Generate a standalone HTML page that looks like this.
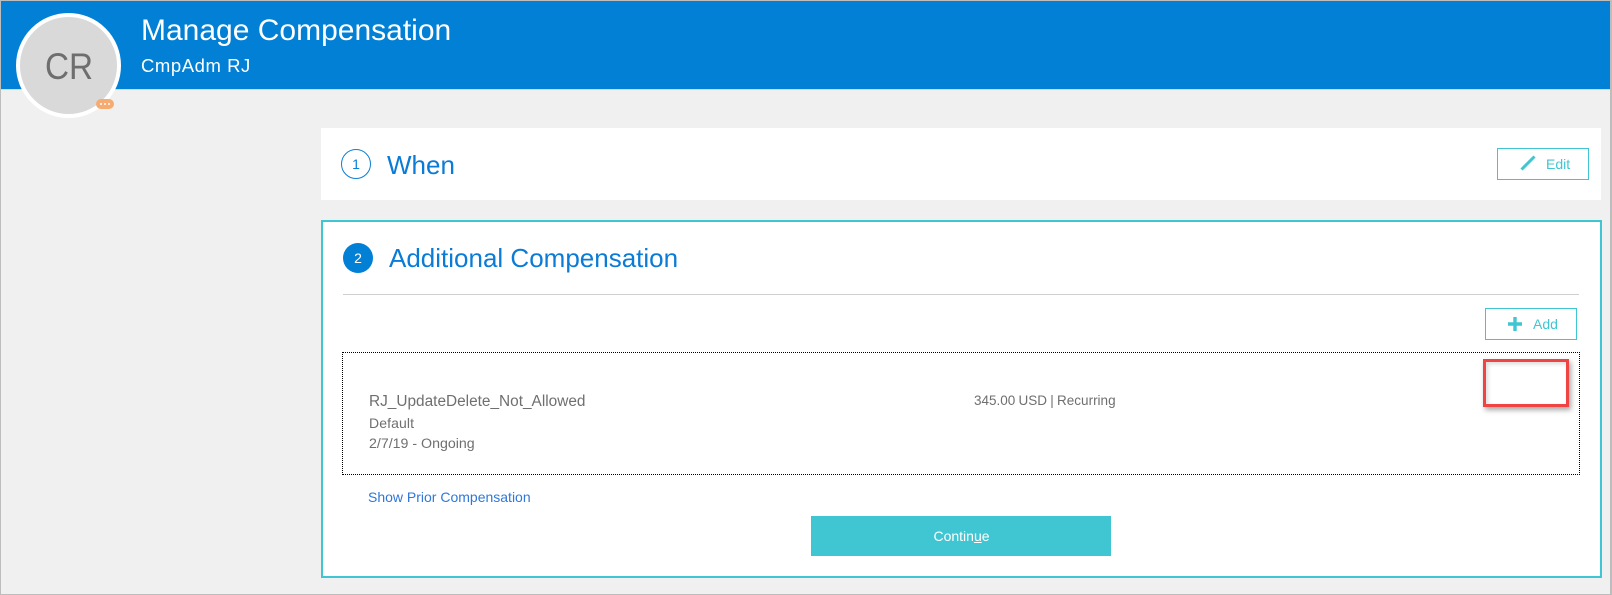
<!DOCTYPE html>
<html>
<head>
<meta charset="utf-8">
<style>
html,body{margin:0;padding:0;width:1612px;height:595px;overflow:hidden;background:#f0f0f0;}
body{position:relative;font-family:"Liberation Sans",Arial,sans-serif;}
.a{position:absolute;box-sizing:border-box;white-space:nowrap;}
.t{position:absolute;white-space:nowrap;line-height:1;}
</style>
</head>
<body>
<div class="a" style="left:0;top:0;width:1612px;height:595px;border:1px solid #bdbdbd;border-right-width:2px;"></div>
<div class="a" style="left:1px;top:1px;width:1609px;height:88px;background:#0180d6;"></div>
<div class="a" style="left:1px;top:89px;width:1609px;height:1px;background:#c4dcee;"></div>

<div class="a" style="left:16px;top:13px;width:105px;height:105px;border-radius:50%;background:#d9d9d9;border:4px solid #fff;"></div>
<div class="t" style="left:45px;top:48px;font-size:37px;transform:scaleX(.9);transform-origin:0 0;color:#6e6e6e;">CR</div>
<div class="a" style="left:96px;top:99px;width:18px;height:10px;border-radius:5px;background:#f6ab70;"></div>
<div class="a" style="left:100px;top:103px;width:2px;height:2px;border-radius:50%;background:#fff;"></div>
<div class="a" style="left:104px;top:103px;width:2px;height:2px;border-radius:50%;background:#fff;"></div>
<div class="a" style="left:108px;top:103px;width:2px;height:2px;border-radius:50%;background:#fff;"></div>

<div class="t" style="left:141px;top:16px;font-size:30px;color:#fff;">Manage Compensation</div>
<div class="t" style="left:141px;top:57px;font-size:18.5px;letter-spacing:.55px;color:#fff;">CmpAdm RJ</div>

<div class="a" style="left:321px;top:128px;width:1280px;height:72px;background:#fff;"></div>
<div class="a" style="left:341px;top:149px;width:30px;height:30px;border-radius:50%;border:1px solid #0a7fd5;"></div>
<div class="t" style="left:341px;top:157px;width:30px;text-align:center;font-size:14px;color:#0a7fd5;">1</div>
<div class="t" style="left:387px;top:152px;font-size:26px;color:#0a7bd6;">When</div>
<div class="a" style="left:1497px;top:148px;width:92px;height:32px;border:1px solid #40c6d2;"></div>
<svg class="a" style="left:1520px;top:155px;" width="16" height="16" viewBox="0 0 16 16"><path d="M1.5 14.5 L14.5 1.5" stroke="#40c6d2" stroke-width="3" fill="none"/></svg>
<div class="t" style="left:1546px;top:157px;font-size:14px;color:#40c6d2;">Edit</div>

<div class="a" style="left:321px;top:220px;width:1281px;height:358px;background:#fff;border:2px solid #40c6d2;"></div>
<div class="a" style="left:343px;top:243px;width:30px;height:30px;border-radius:50%;background:#0180d6;"></div>
<div class="t" style="left:343px;top:251px;width:30px;text-align:center;font-size:14px;color:#fff;">2</div>
<div class="t" style="left:389px;top:245px;font-size:26px;color:#0a7bd6;">Additional Compensation</div>
<div class="a" style="left:343px;top:294px;width:1236px;height:1px;background:#cfcfcf;"></div>

<div class="a" style="left:1485px;top:308px;width:92px;height:32px;border:1px solid #40c6d2;"></div>
<svg class="a" style="left:1508px;top:317px;" width="14" height="14" viewBox="0 0 14 14"><path d="M7 0V14M0 7H14" stroke="#40c6d2" stroke-width="3.4" fill="none"/></svg>
<div class="t" style="left:1533px;top:317px;font-size:14px;color:#40c6d2;">Add</div>

<div class="a" style="left:342px;top:352px;width:1238px;height:123px;border:1px dotted #000;"></div>
<div class="t" style="left:369px;top:394px;font-size:15.4px;color:#6f6f6f;">RJ_UpdateDelete_Not_Allowed</div>
<div class="t" style="left:369px;top:416px;font-size:14px;letter-spacing:.1px;color:#6f6f6f;">Default</div>
<div class="t" style="left:369px;top:437px;font-size:14.2px;color:#6f6f6f;">2/7/19 - Ongoing</div>
<div class="t" style="left:974px;top:394px;font-size:13.5px;word-spacing:-.5px;color:#6f6f6f;">345.00 USD | Recurring</div>

<div class="a" style="left:1483px;top:359px;width:86px;height:48px;border:3px solid #f04444;box-shadow:2px 3px 5px rgba(0,0,0,.35),inset 2px 2px 4px rgba(0,0,0,.15);"></div>

<div class="t" style="left:368px;top:490px;font-size:14px;color:#2f78d8;">Show Prior Compensation</div>
<div class="a" style="left:811px;top:516px;width:300px;height:40px;background:#40c6d2;"></div>
<div class="t" style="left:811px;top:529px;width:301px;text-align:center;font-size:14px;color:#fff;">Contin<span style="text-decoration:underline;">u</span>e</div>
</body>
</html>
